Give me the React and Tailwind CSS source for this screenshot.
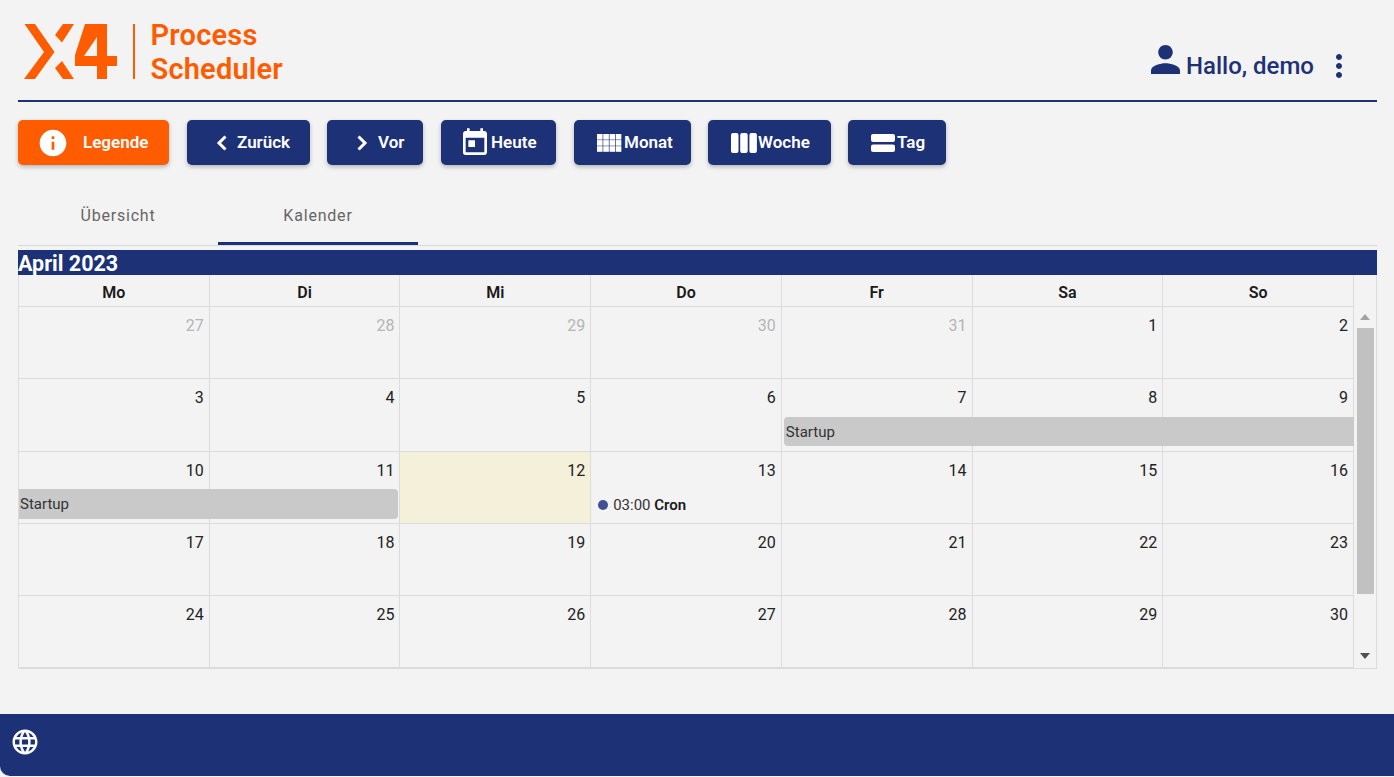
import React from 'react';
import { MdInfo, MdToday, MdMoreVert, MdLanguage } from 'react-icons/md';

const weekdays = ['Mo', 'Di', 'Mi', 'Do', 'Fr', 'Sa', 'So'];

const weeks = [
  [27, 28, 29, 30, 31, 1, 2],
  [3, 4, 5, 6, 7, 8, 9],
  [10, 11, 12, 13, 14, 15, 16],
  [17, 18, 19, 20, 21, 22, 23],
  [24, 25, 26, 27, 28, 29, 30],
];

const Logo = () => (
  <svg width="94" height="56" viewBox="24 24 94 56" className="shrink-0">
    <path
      fill="#ff5c00"
      d="M24.5 24H35L54.5 52 35 79H24L44 52ZM63 24H74L62 42.5 55 35ZM55 68 62 61 74 79H63ZM85 24H107V56H117V66H107V79H97V66H75V55ZM97 37 84 56H97Z"
      fillRule="evenodd"
    />
  </svg>
);

const PersonIcon = () => (
  <svg width="29" height="29" viewBox="4 4 16 16" fill="#1d3176" className="mb-[12px]">
    <path d="M12 12c2.21 0 4-1.79 4-4s-1.79-4-4-4-4 1.79-4 4 1.79 4 4 4zm0 2c-2.67 0-8 1.34-8 4v2h16v-2c0-2.66-5.33-4-8-4z" />
  </svg>
);

const Chevron = ({ points }) => (
  <svg width="12" height="16" viewBox="0 0 12 16" fill="none" stroke="#fff" strokeWidth="3">
    <path d={points} />
  </svg>
);

const MonthIcon = () => (
  <svg width="25" height="18" viewBox="0 0 25 18" fill="#fff">
    {[0, 1, 2].map((row) =>
      [0, 1, 2, 3].map((col) => (
        <rect key={`${row}-${col}`} x={col * 6.25} y={row * 6.1} width="5.6" height="5.6" />
      ))
    )}
  </svg>
);

const WeekIcon = () => (
  <svg width="26" height="20" viewBox="0 0 26 20" fill="#fff">
    <rect x="0" y="0" width="7.5" height="20" rx="2" />
    <rect x="9.2" y="0" width="7.5" height="20" rx="2" />
    <rect x="18.4" y="0" width="7.5" height="20" rx="2" />
  </svg>
);

const DayIcon = () => (
  <svg width="24" height="18" viewBox="0 0 24 18" fill="#fff">
    <rect x="0" y="0" width="24" height="8" rx="2" />
    <rect x="0" y="10.5" width="24" height="7.5" rx="2" />
  </svg>
);

const NavButton = ({ width, gap, pad, children, label, orange }) => (
  <button
    className={`flex h-[45px] items-center rounded-[5px] font-semibold text-white shadow-[0_2px_4px_rgba(0,0,0,0.25)] ${orange ? 'bg-[#ff5c00]' : 'bg-[#1d3176]'} ${width} ${gap} ${pad}`}
  >
    {children}
    <span className="text-[17px]">{label}</span>
  </button>
);

const DayCell = ({ day, muted, today, col, children }) => (
  <div
    className={`${col} row-start-1 border-b border-r border-[#dcdcdc] px-[5px] pt-[8px] text-right text-[16px] leading-[22px] ${muted ? 'text-[#b5b5b5]' : 'text-[#222222]'} ${today ? 'bg-[#f5f0d9]' : ''}`}
  >
    {day}
    {children}
  </div>
);

const columnClasses = ['col-start-1', 'col-start-2', 'col-start-3', 'col-start-4', 'col-start-5', 'col-start-6', 'col-start-7'];

const Week = ({ days, index, height, children }) => (
  <div className={`grid grid-cols-7 ${height}`}>
    {days.map((day, i) => (
      <DayCell
        key={i}
        day={day}
        col={columnClasses[i]}
        muted={index === 0 && i < 5}
        today={index === 2 && i === 2}
      >
        {index === 2 && i === 3 && (
          <div className="ml-[2px] mt-[14px] flex items-center gap-[5px] text-left text-[15px] leading-[18px] text-[#333333]">
            <span className="h-[10px] w-[10px] rounded-full bg-[#3f5194]" />
            <span>
              03:00 <b className="font-semibold text-[#1a1a1a]">Cron</b>
            </span>
          </div>
        )}
      </DayCell>
    ))}
    {children}
  </div>
);

const App = () => {
  return (
    <div className="flex h-[777px] w-[1394px] flex-col overflow-hidden bg-[#f3f3f3] font-['Roboto',sans-serif]">
      <main className="flex-1 px-[18px] pr-[17px]">
        <header className="flex h-[102px] items-start border-b-2 border-[#1d3176] pt-[24px]">
          <div className="ml-[6px]">
            <Logo />
          </div>
          <div className="ml-[15px] h-[55px] w-[1.5px] bg-[#ff5c00]" />
          <div className="ml-[16px] mt-[-6px] text-[29px] font-semibold leading-[34px] tracking-[0.2px] text-[#ff5c00]">
            <div>Process</div>
            <div>Scheduler</div>
          </div>
          <div className="ml-auto mr-[20px] mt-[21px] flex items-center">
            <PersonIcon />
            <span className="ml-[6px] text-[24px] font-medium leading-[30px] text-[#1d3176]">Hallo, demo</span>
            <MdMoreVert className="ml-[7px] text-[#1d3176]" size={36} />
          </div>
        </header>

        <nav className="mt-[18px] flex">
          <NavButton orange width="w-[151px]" gap="gap-[14px]" pad="pl-[19px]" label="Legende">
            <MdInfo size={32} color="#fff" />
          </NavButton>
          <NavButton width="ml-[18px] w-[123px]" gap="gap-[9px]" pad="pl-[29px]" label="Zurück">
            <Chevron points="M9.5 1.5 3 8l6.5 6.5" />
          </NavButton>
          <NavButton width="ml-[17px] w-[96px]" gap="gap-[10px]" pad="pl-[29px]" label="Vor">
            <Chevron points="M2.5 1.5 9 8l-6.5 6.5" />
          </NavButton>
          <NavButton width="ml-[18px] w-[115px]" gap="gap-[0px]" pad="pl-[18px]" label="Heute">
            <MdToday size={32} color="#fff" />
          </NavButton>
          <NavButton width="ml-[18px] w-[117px]" gap="gap-[2px]" pad="pl-[23px]" label="Monat">
            <MonthIcon />
          </NavButton>
          <NavButton width="ml-[17px] w-[123px]" gap="gap-[1px]" pad="pl-[23px]" label="Woche">
            <WeekIcon />
          </NavButton>
          <NavButton width="ml-[17px] w-[98px]" gap="gap-[2px]" pad="pl-[23px]" label="Tag">
            <DayIcon />
          </NavButton>
        </nav>

        <div className="mt-[20px] flex h-[61px] border-b border-[#d9d9d9] text-[16px] tracking-[0.8px] text-[#666666]">
          <div className="flex h-[60px] w-[200px] items-center justify-center pt-[1px]">Übersicht</div>
          <div className="flex h-[60px] w-[200px] items-center justify-center border-b-[3px] border-[#1d3176] pt-[4px]">
            Kalender
          </div>
        </div>

        <section className="mt-[4px] w-[1359px]">
          <div className="h-[25px] bg-[#1d3176] text-[21.5px] font-bold leading-[27px] text-white">April 2023</div>
          <div className="flex border-b border-r border-[#dcdcdc]">
            <div className="w-[1336px] border-l border-[#dcdcdc]">
              <div className="grid h-[32px] grid-cols-7">
                {weekdays.map((name) => (
                  <div
                    key={name}
                    className="border-b border-r border-[#dcdcdc] pt-[7px] text-center text-[16px] font-semibold leading-[22px] text-[#1a1a1a]"
                  >
                    {name}
                  </div>
                ))}
              </div>
              <Week days={weeks[0]} index={0} height="h-[72px]" />
              <Week days={weeks[1]} index={1} height="h-[73px]">
                <div className="col-span-3 col-start-5 row-start-1 ml-[2px] mt-[38px] h-[29px] self-start rounded-l-[4px] bg-[#c9c9c9] pl-[2px] pt-[1px] text-[15px] leading-[29px] text-[#333333]">
                  Startup
                </div>
              </Week>
              <Week days={weeks[2]} index={2} height="h-[72px]">
                <div className="col-span-2 col-start-1 row-start-1 mr-[2px] mt-[37px] h-[30px] self-start rounded-r-[4px] bg-[#c9c9c9] pl-[1px] text-[15px] leading-[30px] text-[#333333]">
                  Startup
                </div>
              </Week>
              <Week days={weeks[3]} index={3} height="h-[72px]" />
              <Week days={weeks[4]} index={4} height="h-[72px]" />
            </div>
            <div className="flex w-[22px] flex-col items-center">
              <div className="h-[31px] w-full" />
              <div className="flex h-[22px] w-full items-center justify-center">
                <svg width="10" height="6" viewBox="0 0 10 6" fill="#a3a3a3">
                  <path d="M5 0 10 6H0Z" />
                </svg>
              </div>
              <div className="h-[266px] w-[17px] bg-[#c1c1c1]" />
              <div className="flex flex-1 items-end pb-[9px]">
                <svg width="10" height="6" viewBox="0 0 10 6" fill="#505050">
                  <path d="M0 0H10L5 6Z" />
                </svg>
              </div>
            </div>
          </div>
        </section>
      </main>

      <footer className="mb-[1px] flex h-[62px] items-center rounded-bl-[10px] bg-[#1d3176] pb-[6px] pl-[10px]">
        <MdLanguage size={30} color="#fff" />
      </footer>
    </div>
  );
};

export default App;
